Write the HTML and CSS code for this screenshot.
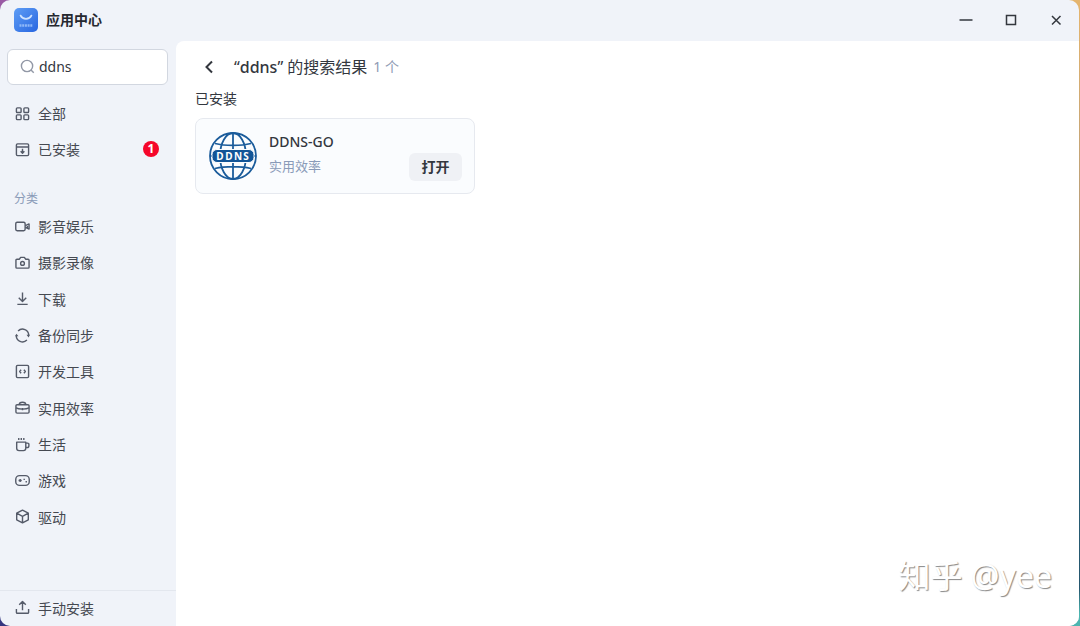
FILE: index.html
```html
<!DOCTYPE html>
<html lang="zh-CN">
<head>
    <meta charset="UTF-8">
    <meta name="viewport" content="width=device-width, initial-scale=1.0">
    <title>应用中心</title>
    <link rel="stylesheet" href="styles.css">
</head>
<body>
    <div class="window">
        <header class="titlebar">
            <svg class="app-logo" viewBox="0 0 24 24">
                <defs>
                    <linearGradient id="logoFill" x1="0" y1="0" x2="1" y2="1">
                        <stop offset="0" stop-color="#5e9df5"/>
                        <stop offset="1" stop-color="#2866e0"/>
                    </linearGradient>
                </defs>
                <rect width="24" height="24" rx="5" fill="url(#logoFill)"/>
                <path d="M6.500 7.500c2.500 4.500 8.500 4.500 11 0" fill="none" stroke="#cfe3ff" stroke-width="1.600" stroke-linecap="round"/>
                <path d="M5.500 17.500h13" stroke="#8fb8f8" stroke-width="2.500" stroke-dasharray="2 .7"/>
            </svg>
            <h1 class="app-name">应用中心</h1>
            <div class="window-controls">
                <button class="window-button" aria-label="最小化"><svg viewBox="0 0 16 16"><path d="M1.500 8h13"/></svg></button>
                <button class="window-button" aria-label="最大化"><svg viewBox="0 0 16 16"><path d="M3.500 3.500h9v9h-9z"/></svg></button>
                <button class="window-button" aria-label="关闭"><svg viewBox="0 0 16 16"><path d="M4 4l8.500 8.500M12.500 4L4 12.500"/></svg></button>
            </div>
        </header>

        <div class="layout">
            <aside class="sidebar">
                <label class="search">
                    <svg class="search-icon" viewBox="0 0 16 16"><circle cx="7.500" cy="7.500" r="6"/><path d="M11.700 11.700l3 3"/></svg>
                    <input class="search-input" type="text" value="ddns" aria-label="搜索">
                </label>

                <nav class="nav">
                    <a class="nav-item" href="#">
                        <svg class="icon" viewBox="0 0 16 16"><rect x="1.500" y="2" width="5" height="5" rx="1"/><rect x="9.500" y="2" width="5" height="5" rx="1"/><rect x="1.500" y="9.500" width="5" height="5" rx="1"/><rect x="9.500" y="9.500" width="5" height="5" rx="1"/></svg>
                        全部
                    </a>
                    <a class="nav-item" href="#">
                        <svg class="icon" viewBox="0 0 16 16"><rect x="1.500" y="2" width="13" height="12.500" rx="1.200"/><path d="M1.500 5.300h13M8 7.300v4.400M6 9.900l2 2 2-2"/></svg>
                        已安装
                        <span class="badge">1</span>
                    </a>
                </nav>

                <h2 class="nav-title">分类</h2>
                <nav class="nav categories">
                    <a class="nav-item" href="#">
                        <svg class="icon" viewBox="0 0 16 16"><rect x=".8" y="3.500" width="10" height="9" rx="1.500"/><path d="M11 7l4-1.700v5.400L11 9M13.200 6v4"/></svg>
                        影音娱乐
                    </a>
                    <a class="nav-item" href="#">
                        <svg class="icon" viewBox="0 0 16 16"><path d="M2 4.500h2.700L6 2.500h4l1.300 2H14a1 1 0 0 1 1 1v7.500a1 1 0 0 1-1 1H2a1 1 0 0 1-1-1V5.500a1 1 0 0 1 1-1z"/><circle cx="8" cy="9" r="2"/></svg>
                        摄影录像
                    </a>
                    <a class="nav-item" href="#">
                        <svg class="icon" viewBox="0 0 16 16"><path d="M8 1.500v9.500M4 7.300l4 4 4-4M2.500 14.300h11"/></svg>
                        下载
                    </a>
                    <a class="nav-item" href="#">
                        <svg class="icon" viewBox="0 0 16 16"><path d="M3.300 3.200A6.600 6.600 0 0 1 14.600 8M12.700 12.800A6.600 6.600 0 0 1 1.400 8"/><path d="M12.300 7.300H16l-1.500 2.700zM0 8.700h3.700L1.500 6z" fill="currentColor" stroke="none"/></svg>
                        备份同步
                    </a>
                    <a class="nav-item" href="#">
                        <svg class="icon" viewBox="0 0 16 16"><rect x="1.500" y="1.500" width="13" height="13" rx="1.200"/><path d="M6.500 6.200L5 8l1.500 1.800M9.500 6.200L11 8 9.500 9.800"/></svg>
                        开发工具
                    </a>
                    <a class="nav-item" href="#">
                        <svg class="icon" viewBox="0 0 16 16"><rect x="1" y="5" width="14" height="9" rx="1.200"/><path d="M4.500 5c0-3.500 7-3.500 7 0M1 8.500c3 1.700 11 1.700 14 0M8 8.500v2.500"/></svg>
                        实用效率
                    </a>
                    <a class="nav-item" href="#">
                        <svg class="icon" viewBox="0 0 16 16"><path d="M1.800 5.500h9.700v6.500a2.500 2.500 0 0 1-2.500 2.500H4.300a2.500 2.500 0 0 1-2.500-2.500zM11.500 6.500h2a1.300 1.300 0 0 1 1.300 1.300v1.400a2 2 0 0 1-2 2h-1.300M4 1v2.300M6.700 1v2.300M9.400 1v2.300"/></svg>
                        生活
                    </a>
                    <a class="nav-item" href="#">
                        <svg class="icon" viewBox="0 0 16 16"><rect x=".8" y="2.800" width="14.400" height="10.400" rx="4"/><path d="M5.500 6.300v3.400M3.800 8h3.400M9.800 6v1.500M12 8.500V10"/></svg>
                        游戏
                    </a>
                    <a class="nav-item" href="#">
                        <svg class="icon" viewBox="0 0 16 16"><path d="M8 1.200l6.200 3.300v7L8 14.800l-6.200-3.300v-7zM1.800 4.500L8 7.800l6.200-3.300M8 7.800v7"/></svg>
                        驱动
                    </a>
                </nav>

                <div class="sidebar-footer">
                    <a class="nav-item" href="#">
                        <svg class="icon" viewBox="0 0 16 16"><path d="M8 11V1.800M4.500 5L8 1.500 11.500 5M1.500 9.500v3.700a1 1 0 0 0 1 1h11a1 1 0 0 0 1-1V9.500"/></svg>
                        手动安装
                    </a>
                </div>
            </aside>

            <main class="content">
                <div class="result-header">
                    <button class="back" aria-label="返回"><svg viewBox="0 0 16 16"><path d="M11 2.500L5.500 8l5.500 5.500"/></svg></button>
                    <h2 class="result-title">“<span class="keyword">ddns</span>” 的搜索结果</h2>
                    <span class="result-count">1 个</span>
                </div>
                <h3 class="section-title">已安装</h3>
                <div class="card-grid">
                    <article class="card">
                        <svg class="card-icon" viewBox="0 0 48 48">
                            <g fill="none" stroke="#1b5c9b" stroke-width="1.800">
                                <circle cx="24" cy="24" r="23"/>
                                <ellipse cx="24" cy="24" rx="13" ry="23"/>
                                <path d="M24 1v46M6 11.500c10 2.500 26 2.500 36 0M6 36.500c10-2.500 26-2.500 36 0M1 24h46"/>
                            </g>
                            <rect x="3" y="17.500" width="42" height="13" rx="5" fill="#125597" stroke="#fafcfe" stroke-width="1"/>
                            <g class="card-icon-text" text-anchor="middle">
                                <text x="11" y="27.500">D</text>
                                <text x="20" y="27.500">D</text>
                                <text x="29" y="27.500">N</text>
                                <text x="37" y="27.500">S</text>
                            </g>
                        </svg>
                        <div class="card-info">
                            <h4 class="card-name">DDNS-GO</h4>
                            <span class="card-category">实用效率</span>
                        </div>
                        <button class="open-button">打开</button>
                    </article>
                </div>
            </main>
        </div>
        <div class="watermark">知乎 @yee</div>
    </div>
</body>
</html>
```

FILE: styles.css
```css
* {
    box-sizing: border-box;
}
body {
    margin: 0;
    font-family: "Noto Sans", "Noto Sans CJK SC", sans-serif;
    font-size: 14px;
    color: #33373e;
    background-image:
        linear-gradient(#9a5aa5, #34357f),
        linear-gradient(#e5b56e, #b29a7a 40%, #4a9a70 50%, #28637a 60%, #24566e 94%, #4cb5b0 98%);
    background-size: 50% 100%, 50% 100%;
    background-position: left, right;
    background-repeat: no-repeat;
}
h1, h2, h3, h4 {
    margin: 0;
}
button {
    padding: 0;
    border: none;
    background: none;
    font-family: inherit;
    color: inherit;
    cursor: pointer;
}
.window {
    position: relative;
    display: flex;
    flex-direction: column;
    min-height: 100vh;
    margin-right: 1px;
    background-color: #f0f3f9;
    border-radius: 10px;
    overflow: hidden;
}
.titlebar {
    display: flex;
    align-items: center;
    height: 41px;
    padding: 0 8px 2px 14px;
}
.app-logo {
    width: 24px;
    height: 24px;
    margin-right: 8px;
}
.app-name {
    padding-bottom: 2px;
    font-size: 14px;
    font-weight: 700;
    color: #25282f;
}
.window-controls {
    display: flex;
    gap: 15px;
    margin-left: auto;
}
.window-button {
    display: flex;
    align-items: center;
    justify-content: center;
    width: 30px;
    height: 30px;
}
.window-button svg,
.back svg {
    width: 16px;
    height: 16px;
    fill: none;
    stroke: #33373e;
    stroke-width: 1.5;
}
.layout {
    display: flex;
    flex: 1;
}
.sidebar {
    display: flex;
    flex-direction: column;
    width: 176px;
    flex-shrink: 0;
    padding-top: 8px;
}
.search {
    display: flex;
    align-items: center;
    gap: 4px;
    height: 36px;
    margin: 0 8px 11px 7px;
    padding: 0 12px 1px;
    background-color: white;
    border: 1px solid #d2d7e0;
    border-radius: 6px;
}
.search-icon {
    width: 15px;
    height: 15px;
    flex-shrink: 0;
    fill: none;
    stroke: #9298a6;
    stroke-width: 1.5;
}
.search-input {
    width: 100%;
    padding: 0;
    border: none;
    outline: none;
    background: none;
    font-family: inherit;
    font-size: 14px;
    color: #33373e;
}
.nav {
    display: grid;
    grid-auto-rows: 36px;
}
.nav-item {
    display: flex;
    align-items: center;
    gap: 8px;
    padding: 0 17px 2px 15px;
    color: #454951;
    text-decoration: none;
}
.icon {
    width: 15px;
    height: 15px;
    flex-shrink: 0;
    fill: none;
    stroke: #555b69;
    color: #555b69;
    stroke-width: 1.5;
    stroke-linejoin: round;
}
.badge {
    width: 16px;
    height: 16px;
    margin-left: auto;
    border-radius: 50%;
    background-color: #f5062a;
    color: white;
    font-size: 12px;
    font-weight: 700;
    line-height: 16px;
    text-align: center;
}
.nav-title {
    margin-top: 21px;
    padding-left: 14px;
    font-size: 12px;
    font-weight: 400;
    line-height: 20px;
    color: #8a9bb8;
}
.categories {
    height: 327px;
    grid-auto-rows: 1fr;
}
.sidebar-footer {
    display: grid;
    height: 36px;
    margin-top: auto;
    border-top: 1px solid #e3e7ee;
}
.content {
    flex: 1;
    padding: 12px 20px 20px 19px;
    background-color: white;
    border-top-left-radius: 8px;
}
.result-header {
    display: flex;
    align-items: center;
    height: 28px;
}
.back {
    display: flex;
    align-items: center;
    justify-content: center;
    width: 28px;
    height: 28px;
    margin-right: 11px;
}
.back svg {
    stroke-width: 2;
}
.result-title {
    padding-bottom: 2px;
    font-size: 16px;
    font-weight: 400;
}
.keyword {
    font-weight: 500;
}
.result-count {
    margin-left: 6px;
    padding-bottom: 2px;
    font-size: 14px;
    color: #8f9bb3;
}
.section-title {
    margin: 8px 0 9px;
    font-size: 14px;
    font-weight: 400;
    line-height: 20px;
}
.card-grid {
    display: grid;
    grid-template-columns: repeat(auto-fill, 280px);
    gap: 16px;
}
.card {
    display: flex;
    gap: 12px;
    height: 76px;
    padding: 12px 12px 12px 13px;
    background-color: #fafcfe;
    border: 1px solid #e6e9ef;
    border-radius: 8px;
}
.card-icon {
    align-self: center;
    width: 48px;
    height: 48px;
}
.card-icon-text {
    font-size: 10px;
    font-weight: 700;
    fill: white;
}
.card-info {
    flex: 1;
}
.card-name {
    font-size: 14px;
    font-weight: 500;
    line-height: 22px;
}
.card-category {
    display: block;
    font-size: 13px;
    line-height: 26px;
    color: #8a9bb8;
}
.open-button {
    align-self: flex-end;
    width: 53px;
    height: 28px;
    padding-bottom: 2px;
    border-radius: 6px;
    background-color: #eff1f5;
    font-size: 14px;
    font-weight: 700;
}
.open-button:hover {
    background-color: #e4e8ef;
}
.watermark {
    position: absolute;
    right: 27px;
    bottom: 28px;
    font-size: 32px;
    line-height: 44px;
    color: white;
    text-shadow: 1px 1px 1px #888;
}
```
